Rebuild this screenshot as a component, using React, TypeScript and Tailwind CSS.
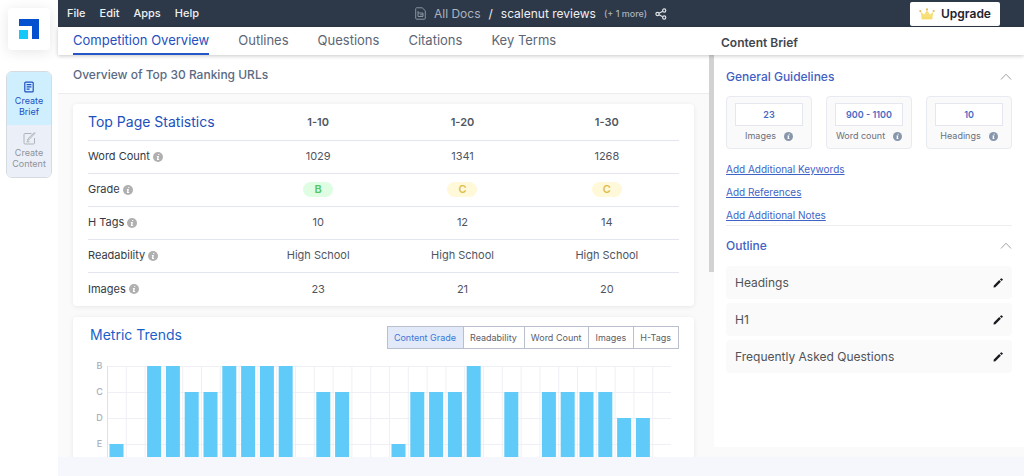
import { useState } from "react";
import type { ReactNode } from "react";

const menuItems = ["File", "Edit", "Apps", "Help"];
const navTabs = ["Competition Overview", "Outlines", "Questions", "Citations", "Key Terms"];
const metrics = ["Content Grade", "Readability", "Word Count", "Images", "H-Tags"];
const ranges = ["1-10", "1-20", "1-30"];
const grades = ["B", "C", "D", "E"];

const stats = [
    { label: "Word Count", values: ["1029", "1341", "1268"] },
    { label: "Grade", values: ["B", "C", "C"], badge: true },
    { label: "H Tags", values: ["10", "12", "14"] },
    { label: "Readability", values: ["High School", "High School", "High School"] },
    { label: "Images", values: ["23", "21", "20"] },
];

// one letter per ranking url, "-" is a page without a grade
const trend = "E-BBCCBBBB-CC--ECCCB-C-CCCCDD-";

const guidelines = [
    { label: "Images", value: "23" },
    { label: "Word count", value: "900 - 1100" },
    { label: "Headings", value: "10" },
];
const extraLinks = ["Add Additional Keywords", "Add References", "Add Additional Notes"];
const outline = ["Headings", "H1", "Frequently Asked Questions"];

function Info({ className }: { className: string }) {
    return (
        <svg viewBox="0 0 10 10" className={className} aria-hidden="true">
            <circle cx="5" cy="5" r="5" fill="currentColor" />
            <path d="M5.2 1.9h1.100v1.200H5.200zM3.900 4h2L5.400 7h.7v.9H3.900L4.300 4.900h-.4z" fill="white" />
        </svg>
    );
}

function Chevron() {
    return (
        <svg viewBox="0 0 12 8" className="h-2 w-3" fill="none" stroke="#a3a3a3" aria-hidden="true">
            <path d="M1 6.5 6 1.2l5 5.3" />
        </svg>
    );
}

function Sidebar() {
    return (
        <aside className="flex w-[58px] shrink-0 flex-col items-center bg-white pt-2">
            <a href="#home" aria-label="Home" className="flex size-[42px] items-center justify-center rounded bg-white shadow-[0_2px_14px_rgba(0,0,0,0.10)]">
                <svg viewBox="0 0 20 20" className="size-5" aria-hidden="true">
                    <path d="M0 0h20v20h-7V7H0z" fill="#0550cf" />
                    <path d="M0 11h9v9H0z" fill="#14c8fa" />
                </svg>
            </a>
            <nav className="mt-[21px] w-[46px] overflow-hidden rounded-md border border-[#d5dbe1] text-center text-[9px] leading-[11px]">
                <a href="#brief" className="flex h-[53px] flex-col items-center gap-[2px] bg-[#d0effe] pt-[9px] text-[#1d4fc4]">
                    <svg viewBox="0 0 10 12" className="h-3 w-[10px] shrink-0" fill="none" stroke="currentColor" strokeWidth="1.2" aria-hidden="true">
                        <rect x=".8" y="1.1" width="8.4" height="9.8" rx="1" />
                        <path d="M2.6 3.7h4.8M2.6 5.9h4.8M2.6 8.1h3" />
                    </svg>
                    <span>Create<br />Brief</span>
                </a>
                <a href="#content" className="flex h-[52px] flex-col items-center gap-[2px] bg-[#ebf0f8] pt-[7px] text-[#8f9299]">
                    <svg viewBox="0 0 13 13" className="size-[13px] shrink-0" fill="none" stroke="#b0b3b8" aria-hidden="true">
                        <path d="M8.5 1.5H2a1 1 0 0 0-1 1V11a1 1 0 0 0 1 1h8.500a1 1 0 0 0 1-1V6" />
                        <path d="M12.500 .8 6 7.700l-1.600.8.600-1.800L11.600.3M3.500 9.800h3" />
                    </svg>
                    <span>Create<br />Content</span>
                </a>
            </nav>
        </aside>
    );
}

function TopBar() {
    return (
        <header className="grid h-[27px] shrink-0 grid-cols-[1fr_auto_1fr] items-center bg-[#2d3848] text-[11px] text-[#eef0f3]">
            <div className="flex gap-[14px] pl-[9px] font-medium">
                {menuItems.map((item) => (
                    <button key={item}>{item}</button>
                ))}
            </div>
            <div className="flex items-center gap-2 text-xs">
                <svg viewBox="0 0 11 13" className="h-[13px] w-[11px]" fill="none" stroke="#8b94a1" aria-hidden="true">
                    <path d="M1.500.8h5.700L10.300 3.700v7.500a1 1 0 0 1-1 1H1.700a1 1 0 0 1-1-1V1.600z" />
                    <path d="M3 4v5.500h5V6H3M5 7.800h3" />
                </svg>
                <a href="#docs" className="text-[#abb3bf]">All Docs</a>
                <span>/</span>
                <span>scalenut reviews</span>
                <button className="text-[9px] font-medium text-[#abb3bf]">(+ 1 more)</button>
                <button aria-label="Share">
                    <svg viewBox="0 0 12 12" className="size-3" fill="none" stroke="#dfe3e8" strokeWidth="1.200" aria-hidden="true">
                        <circle cx="2.500" cy="6" r="1.600" />
                        <circle cx="9.200" cy="2.500" r="1.600" />
                        <circle cx="9.200" cy="9.500" r="1.600" />
                        <path d="m4 5.200 3.700-2M4 6.800l3.700 2" />
                    </svg>
                </button>
            </div>
            <div className="flex justify-end pr-6">
                <button className="flex h-6 w-[90px] items-center justify-center gap-[6px] rounded-xs bg-white text-xs font-semibold text-[#1f2330]">
                    <svg viewBox="0 0 16 12" className="h-3 w-4" aria-hidden="true">
                        <path d="M1.500 3.500 5 6.500 8 2l3 4.500 3.500-3-1.300 7.700H2.800z" fill="#f7e07c" />
                        <path d="M2.800 9.200h10.400v2H2.800z" fill="#f5dc6c" />
                        <g fill="#e2bc62">
                            <circle cx="1.300" cy="3" r="1.100" />
                            <circle cx="8" cy="1.400" r="1.100" />
                            <circle cx="14.700" cy="3" r="1.100" />
                        </g>
                    </svg>
                    Upgrade
                </button>
            </div>
        </header>
    );
}

function Card({ className, children }: { className: string; children: ReactNode }) {
    return <section className={"rounded-sm bg-white shadow-[0_1px_5px_rgba(0,0,0,0.08)] " + className}>{children}</section>;
}

function Statistics() {
    return (
        <Card className="px-[15px] pb-px">
            <table className="w-full table-fixed text-[11px] text-[#50565f]">
                <thead>
                    <tr className="h-9 border-b border-[#e4e6ef]">
                        <th className="w-[158px] text-left text-sm font-normal text-[#1b50bd]">Top Page Statistics</th>
                        {ranges.map((range) => (
                            <th key={range} className="font-semibold">{range}</th>
                        ))}
                    </tr>
                </thead>
                <tbody>
                    {stats.map((row) => (
                        <tr key={row.label} className="h-[33px] border-b border-[#e4e6ef] last:border-0">
                            <th className="text-left font-normal text-[#343a44]">
                                <span className="flex items-center gap-[3px]">
                                    {row.label}
                                    <Info className="size-[10px] text-[#b0b0b0]" />
                                </span>
                            </th>
                            {row.values.map((value, index) => (
                                <td key={index} className="text-center">
                                    {row.badge ? (
                                        <span className={value === "B" ? "inline-block w-[30px] rounded-full bg-[#defde3] font-semibold leading-[15px] text-[#58c666]" :
                                                                         "inline-block w-[30px] rounded-full bg-[#fff9d9] font-semibold leading-[15px] text-[#dfbd4d]"}>
                                            {value}
                                        </span>
                                    ) : value}
                                </td>
                            ))}
                        </tr>
                    ))}
                </tbody>
            </table>
        </Card>
    );
}

function TrendChart() {
    const slot = 564 / trend.length;
    const rowY = (grade: string) => 1 + grades.indexOf(grade) * 26;

    return (
        <div className="mt-1 flex pr-2 pl-1">
            <div className="w-[15px] text-center text-[9px] leading-[26px] font-medium text-[#a8aebb]">
                {grades.map((grade) => (
                    <div key={grade}>{grade}</div>
                ))}
            </div>
            <svg viewBox="0 0 564 260" preserveAspectRatio="none" className="mt-[13px] h-[260px] min-w-0 flex-1" role="img" aria-label="Content grade by ranking page">
                {grades.map((grade) => (
                    <path key={grade} d={`M0 ${rowY(grade) - 0.5}H564`} stroke="#eff0f5" />
                ))}
                {trend.split("").map((_, index) => (
                    <path key={index} d={`M${index * slot + 0.5} 0V260`} stroke={index === 0 ? "#dfe1e7" : "#eff0f5"} />
                ))}
                {trend.split("").map((grade, index) =>
                    grade === "-" ? null : (
                        <rect key={index} x={index * slot + 2.500} y={rowY(grade) - 1} width="14" height="260" fill="#60cbf8" />
                    )
                )}
            </svg>
        </div>
    );
}

function Trends() {
    const [metric, setMetric] = useState(metrics[0]);

    return (
        <Card className="mt-[11px] px-[15px] pt-[9px]">
            <div className="flex items-start justify-between">
                <h2 className="pl-[2px] text-sm leading-[18px] text-[#1b5fc9]">Metric Trends</h2>
                <div className="flex divide-x divide-[#b9bfcc] border border-[#b9bfcc] text-[9px] leading-[21px]">
                    {metrics.map((item) => (
                        <button key={item} onClick={() => setMetric(item)}
                                className={item === metric ? "bg-[#e2e9f8] pr-[7px] pl-[6px] text-[#3a78d8]" : "pr-[7px] pl-[6px] text-[#5c6068]"}>
                            {item}
                        </button>
                    ))}
                </div>
            </div>
            <TrendChart />
        </Card>
    );
}

function Brief() {
    return (
        <aside className="mb-[10px] w-[310px] shrink-0 bg-white pt-[14px] pr-3 pl-3">
            <div className="flex items-center justify-between">
                <h2 className="text-xs leading-4 font-medium text-[#4361c4]">General Guidelines</h2>
                <button aria-label="Toggle general guidelines"><Chevron /></button>
            </div>
            <div className="mt-[11px] flex justify-between">
                {guidelines.map((item) => (
                    <label key={item.label} className="flex h-[53px] w-[86px] flex-col items-center rounded border border-[#e8eaf2] bg-[#fafafb] pt-[6px] text-[9px] text-[#6a717c]">
                        <input defaultValue={item.value} className="h-[23px] w-[68px] border border-[#e4e7f0] bg-white text-center font-semibold text-[#4769c5]" />
                        <span className="mt-[3px] flex items-center gap-2 leading-[14px]">
                            {item.label}
                            <Info className="size-[9px] text-[#8896ab]" />
                        </span>
                    </label>
                ))}
            </div>
            <ul className="mt-[14px] flex flex-col gap-[10px] border-b border-[#eeeef0] pb-[3px] text-[10px] leading-[13px] text-[#4064c6]">
                {extraLinks.map((link) => (
                    <li key={link}><a href="#brief" className="underline">{link}</a></li>
                ))}
            </ul>
            <div className="mt-3 flex items-center justify-between">
                <h2 className="text-xs leading-4 font-medium text-[#4361c4]">Outline</h2>
                <button aria-label="Toggle outline"><Chevron /></button>
            </div>
            <ul className="mt-3 flex flex-col gap-1 text-[#505358]">
                {outline.map((item) => (
                    <li key={item} className="flex h-[33px] items-center justify-between rounded bg-[#fafafa] px-[9px] text-xs">
                        {item}
                        <button aria-label={"Edit " + item}>
                            <svg viewBox="0 0 10 10" className="size-[10px]" fill="#1b1b22" aria-hidden="true">
                                <path d="m6.200 2.100 1.700 1.700L2.400 9.200.500 9.600l.300-2zM6.900 1.400 8 .4a.6.6 0 0 1 .8 0l.9.900a.6.6 0 0 1 0 .8L8.600 3.100z" />
                            </svg>
                        </button>
                    </li>
                ))}
            </ul>
        </aside>
    );
}

export default function App() {
    const [tab, setTab] = useState(navTabs[0]);

    return (
        <div className="flex h-screen overflow-hidden bg-[#f5f7fc] font-['Inter','Liberation_Sans',sans-serif]">
            <Sidebar />
            <div className="flex min-w-0 flex-1 flex-col pb-[19px]">
                <TopBar />
                <div className="z-10 flex h-7 shrink-0 bg-white shadow-[0_1px_4px_rgba(0,0,0,0.22)]">
                    <nav className="flex flex-1 gap-[29px] pl-[15px] text-[13px] text-[#5c6675]">
                        {navTabs.map((item) => (
                            <button key={item} onClick={() => setTab(item)}
                                    className={item === tab ? "border-b-2 border-[#2458c8] pt-[2px] text-[#2450c0]" : "border-b-2 border-transparent pt-[2px]"}>
                                {item}
                            </button>
                        ))}
                    </nav>
                    <h2 className="w-[303px] text-xs leading-[31px] font-semibold text-[#3f4650]">Content Brief</h2>
                </div>
                <div className="flex min-h-0 flex-1 bg-[#fafafa]">
                    <main className="flex min-w-0 flex-1 flex-col overflow-hidden">
                        <h1 className="h-[39px] shrink-0 border-b border-[#ececee] bg-white pl-[15px] text-xs leading-[39px] font-medium text-[#5a6a83]">Overview of Top 30 Ranking URLs</h1>
                        <div className="pt-[10px] pr-[15px] pl-[15px]">
                            <Statistics />
                            <Trends />
                        </div>
                    </main>
                    <div className="w-[5px] shrink-0">
                        <div className="h-[217px] bg-[#d2d2d2]" />
                    </div>
                    <Brief />
                </div>
            </div>
        </div>
    );
}
